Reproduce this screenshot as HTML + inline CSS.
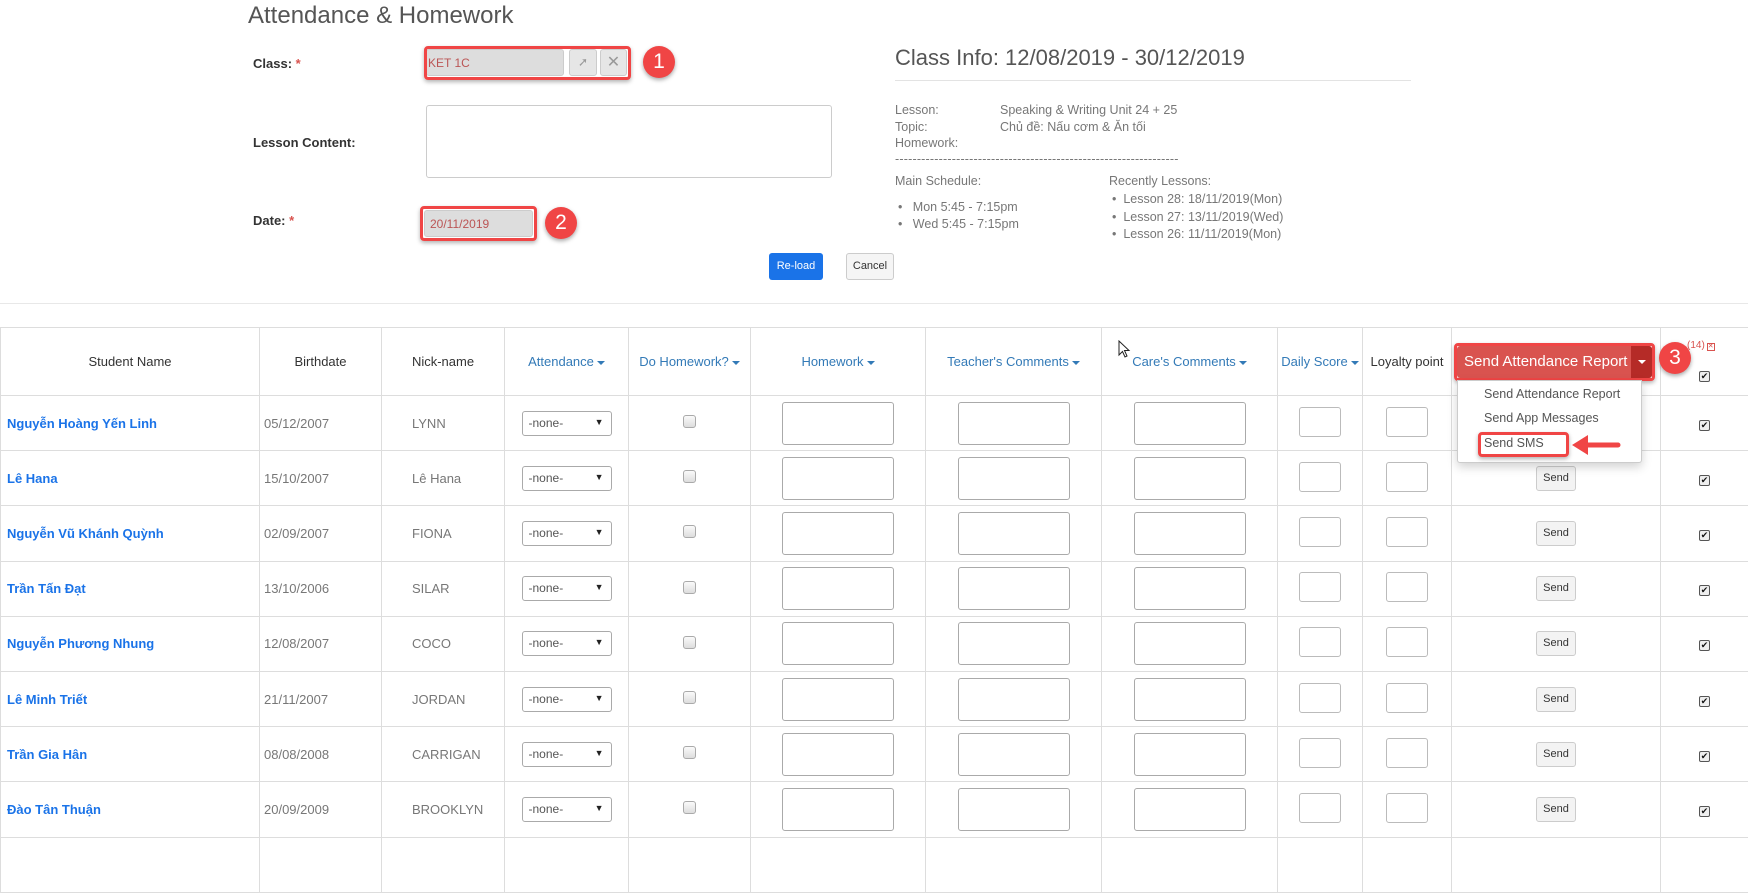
<!DOCTYPE html>
<html><head><meta charset="utf-8">
<style>
*{box-sizing:border-box;margin:0;padding:0}
body{width:1748px;height:829px;overflow:hidden;background:#fff;font-family:"Liberation Sans","Noto Sans CJK SC",sans-serif;color:#333;position:relative;font-size:13px}
.a{position:absolute}
.lbl{font-weight:bold;font-size:13px;color:#333}
.req{color:#d9534f}
.badge{position:absolute;width:32px;height:32px;border-radius:50%;background:#f04545;color:#fff;font-size:21px;text-align:center;line-height:32px;box-shadow:0 2px 4px rgba(0,0,0,.35)}
.redbox{position:absolute;border:3px solid #f04545;border-radius:4px;box-shadow:0 2px 4px rgba(0,0,0,.3)}
.info{font-size:12.5px;color:#777}
table{position:absolute;left:0;top:327px;border-collapse:collapse;table-layout:fixed;width:1748px}
td,th{border:1px solid #ddd;height:55.2px;font-weight:normal;font-size:13px;text-align:center;vertical-align:middle;padding:0;white-space:nowrap}
th{height:68px;color:#333}
th.l{color:#337ab7}
.car{display:inline-block;width:0;height:0;border-left:4px solid transparent;border-right:4px solid transparent;border-top:4px solid #337ab7;margin-left:3px;vertical-align:middle}
td.n{text-align:left;padding-left:6px;color:#1a73e8;font-weight:bold}
td.g{text-align:left;padding-left:4px;color:#777}
.sel{display:inline-block;width:90px;height:25px;border:1px solid #aaa;border-radius:3px;text-align:left;padding:4px 6px;font-size:12px;color:#555;position:relative}
.sel:after{content:"▼";position:absolute;right:7px;top:5px;font-size:9px;color:#222}
.cb{display:inline-block;width:13px;height:13px;border:1px solid #aaa;border-radius:3px;background:linear-gradient(#fafafa,#ddd)}
.ta{display:inline-block;width:112px;height:43px;border:1px solid #aaa;border-radius:3px;margin-top:3px}
.sq{display:inline-block;width:42px;height:30px;border:1px solid #bbb;border-radius:3px}
.sb{display:inline-block;width:40px;height:25px;border:1px solid #ccc;border-radius:3px;background:#f3f3f3;font-size:11px;line-height:23px;color:#333}
.ck{display:inline-block;width:11px;height:11px;border:1px solid #555;border-radius:2px;font-size:9px;line-height:9px;color:#111;background:#eee}
</style></head><body>

<div class="a" style="left:248px;top:2px;font-size:24px;color:#555">Attendance &amp; Homework</div>

<div class="a lbl" style="left:253px;top:56px">Class: <span class="req">*</span></div>
<div class="a" style="left:426px;top:49px;width:138px;height:27px;background:#ddd;border:1px solid #ccc;border-radius:3px;color:#b55;font-size:12px;padding:6px 0 0 1px">KET 1C</div>
<div class="a" style="left:569px;top:49px;width:28px;height:27px;background:#e6e6e6;border:1px solid #ccc;border-radius:3px;color:#999;text-align:center;line-height:25px;font-size:12px">➚</div>
<div class="a" style="left:600px;top:49px;width:27px;height:27px;background:#e6e6e6;border:1px solid #ccc;border-radius:3px;color:#999;text-align:center;line-height:25px;font-size:16px">✕</div>
<div class="redbox" style="left:424px;top:46px;width:207px;height:34px"></div>
<div class="badge" style="left:643px;top:46px">1</div>

<div class="a lbl" style="left:253px;top:135px">Lesson Content:</div>
<div class="a" style="left:426px;top:105px;width:406px;height:73px;border:1px solid #ccc;border-radius:3px"></div>

<div class="a lbl" style="left:253px;top:213px">Date: <span class="req">*</span></div>
<div class="a" style="left:424px;top:210px;width:109px;height:27px;background:#ddd;border:1px solid #ccc;border-radius:3px;color:#b55;font-size:12px;padding:6px 0 0 5px">20/11/2019</div>
<div class="redbox" style="left:420px;top:206px;width:117px;height:35px"></div>
<div class="badge" style="left:545px;top:207px">2</div>

<div class="a" style="left:769px;top:253px;width:54px;height:27px;background:#1a73e8;border-radius:3px;color:#fff;font-size:11px;text-align:center;line-height:27px">Re-load</div>
<div class="a" style="left:846px;top:253px;width:48px;height:27px;background:#f5f5f5;border:1px solid #ccc;border-radius:3px;color:#333;font-size:11px;text-align:center;line-height:25px">Cancel</div>

<div class="a" style="left:895px;top:45px;font-size:22px;color:#555">Class Info: 12/08/2019 - 30/12/2019</div>
<div class="a" style="left:895px;top:80px;width:516px;border-top:1px solid #e3e3e3"></div>
<div class="a info" style="left:895px;top:102px;line-height:16.5px">Lesson:<br>Topic:<br>Homework:</div>
<div class="a info" style="left:1000px;top:102px;line-height:16.5px">Speaking &amp; Writing Unit 24 + 25<br>Chủ đề: Nấu cơm &amp; Ăn tối</div>
<div class="a info" style="left:895px;top:152px;letter-spacing:0.2px">-----------------------------------------------------------------</div>
<div class="a info" style="left:895px;top:174px">Main Schedule:</div>
<div class="a info" style="left:898px;top:199px;line-height:17px">•&nbsp;&nbsp; Mon 5:45 - 7:15pm<br>•&nbsp;&nbsp; Wed 5:45 - 7:15pm</div>
<div class="a info" style="left:1109px;top:174px">Recently Lessons:</div>
<div class="a info" style="left:1112px;top:191px;line-height:17.5px">•&nbsp; Lesson 28: 18/11/2019(Mon)<br>•&nbsp; Lesson 27: 13/11/2019(Wed)<br>•&nbsp; Lesson 26: 11/11/2019(Mon)</div>

<div class="a" style="left:0;top:303px;width:1748px;border-top:1px solid #e8e8e8"></div>

<table>
<colgroup><col style="width:259px"><col style="width:122px"><col style="width:123px"><col style="width:124px"><col style="width:122px"><col style="width:175px"><col style="width:176px"><col style="width:176px"><col style="width:85px"><col style="width:89px"><col style="width:209px"><col style="width:88px"></colgroup>
<tr><th>Student Name</th><th>Birthdate</th><th>Nick-name</th><th class="l">Attendance<span class="car"></span></th><th class="l">Do Homework?<span class="car"></span></th><th class="l">Homework<span class="car"></span></th><th class="l">Teacher's Comments<span class="car"></span></th><th class="l">Care's Comments<span class="car"></span></th><th class="l">Daily Score<span class="car"></span></th><th>Loyalty point</th><th></th><th><span class="ck" style="margin-top:30px">✔</span></th></tr>
<tr><td class="n">Nguyễn Hoàng Yến Linh</td><td class="g">05/12/2007</td><td class="g" style="padding-left:30px">LYNN</td><td><span class="sel">-none-</span></td><td><span class="cb"></span></td><td><span class="ta"></span></td><td><span class="ta"></span></td><td><span class="ta"></span></td><td><span class="sq"></span></td><td><span class="sq"></span></td><td></td><td><span class="ck">✔</span></td></tr>
<tr><td class="n">Lê Hana</td><td class="g">15/10/2007</td><td class="g" style="padding-left:30px">Lê Hana</td><td><span class="sel">-none-</span></td><td><span class="cb"></span></td><td><span class="ta"></span></td><td><span class="ta"></span></td><td><span class="ta"></span></td><td><span class="sq"></span></td><td><span class="sq"></span></td><td><span class="sb">Send</span></td><td><span class="ck">✔</span></td></tr>
<tr><td class="n">Nguyễn Vũ Khánh Quỳnh</td><td class="g">02/09/2007</td><td class="g" style="padding-left:30px">FIONA</td><td><span class="sel">-none-</span></td><td><span class="cb"></span></td><td><span class="ta"></span></td><td><span class="ta"></span></td><td><span class="ta"></span></td><td><span class="sq"></span></td><td><span class="sq"></span></td><td><span class="sb">Send</span></td><td><span class="ck">✔</span></td></tr>
<tr><td class="n">Trần Tấn Đạt</td><td class="g">13/10/2006</td><td class="g" style="padding-left:30px">SILAR</td><td><span class="sel">-none-</span></td><td><span class="cb"></span></td><td><span class="ta"></span></td><td><span class="ta"></span></td><td><span class="ta"></span></td><td><span class="sq"></span></td><td><span class="sq"></span></td><td><span class="sb">Send</span></td><td><span class="ck">✔</span></td></tr>
<tr><td class="n">Nguyễn Phương Nhung</td><td class="g">12/08/2007</td><td class="g" style="padding-left:30px">COCO</td><td><span class="sel">-none-</span></td><td><span class="cb"></span></td><td><span class="ta"></span></td><td><span class="ta"></span></td><td><span class="ta"></span></td><td><span class="sq"></span></td><td><span class="sq"></span></td><td><span class="sb">Send</span></td><td><span class="ck">✔</span></td></tr>
<tr><td class="n">Lê Minh Triết</td><td class="g">21/11/2007</td><td class="g" style="padding-left:30px">JORDAN</td><td><span class="sel">-none-</span></td><td><span class="cb"></span></td><td><span class="ta"></span></td><td><span class="ta"></span></td><td><span class="ta"></span></td><td><span class="sq"></span></td><td><span class="sq"></span></td><td><span class="sb">Send</span></td><td><span class="ck">✔</span></td></tr>
<tr><td class="n">Trần Gia Hân</td><td class="g">08/08/2008</td><td class="g" style="padding-left:30px">CARRIGAN</td><td><span class="sel">-none-</span></td><td><span class="cb"></span></td><td><span class="ta"></span></td><td><span class="ta"></span></td><td><span class="ta"></span></td><td><span class="sq"></span></td><td><span class="sq"></span></td><td><span class="sb">Send</span></td><td><span class="ck">✔</span></td></tr>
<tr><td class="n">Đào Tân Thuận</td><td class="g">20/09/2009</td><td class="g" style="padding-left:30px">BROOKLYN</td><td><span class="sel">-none-</span></td><td><span class="cb"></span></td><td><span class="ta"></span></td><td><span class="ta"></span></td><td><span class="ta"></span></td><td><span class="sq"></span></td><td><span class="sq"></span></td><td><span class="sb">Send</span></td><td><span class="ck">✔</span></td></tr>
<tr><td class="n"></td><td></td><td></td><td></td><td></td><td></td><td></td><td></td><td></td><td></td><td></td><td></td></tr>
</table>

<svg class="a" style="left:1118px;top:340px" width="14" height="20" viewBox="0 0 14 20"><path d="M1 1 L1 15 L4.5 11.5 L7 17 L9 16 L6.5 10.5 L11 10.5 Z" fill="#fff" stroke="#222" stroke-width="1"/></svg>

<div class="a" style="left:1457px;top:346px;width:195px;height:32px;background:#d9534f;border-radius:3px;color:#fff;font-size:15px;line-height:32px;padding-left:7px;white-space:nowrap;overflow:hidden">Send Attendance Report</div>
<div class="a" style="left:1631px;top:346px;width:21px;height:32px;background:#b52b27;border-radius:0 3px 3px 0"><span style="position:absolute;left:7px;top:14px;border-left:4px solid transparent;border-right:4px solid transparent;border-top:4px solid #fff"></span></div>
<div class="redbox" style="left:1454px;top:343px;width:201px;height:38px"></div>
<div class="badge" style="left:1659px;top:342px">3</div>
<div class="a" style="left:1687px;top:340px;font-size:10px;color:#d9534f">(14)<span style="display:inline-block;width:8px;height:8px;border:1px solid #d9534f;margin-left:2px;font-size:7px;line-height:6px">✕</span></div>

<div class="a" style="left:1457px;top:380px;width:185px;height:83px;background:#fff;border:1px solid #ccc;border-radius:0 0 3px 3px;box-shadow:0 4px 10px rgba(0,0,0,.18)"></div>
<div class="a" style="left:1484px;top:387px;font-size:12.5px;color:#555">Send Attendance Report</div>
<div class="a" style="left:1484px;top:411px;font-size:12.5px;color:#555">Send App Messages</div>
<div class="a" style="left:1484px;top:436px;font-size:12.5px;color:#555">Send SMS</div>
<div class="redbox" style="left:1478px;top:432px;width:91px;height:25px"></div>
<svg class="a" style="left:1568px;top:432px" width="54" height="26" viewBox="0 0 54 26"><path d="M50 13 L18 13" stroke="#f04545" stroke-width="5" stroke-linecap="round"/><path d="M4 13 L20 3 L20 23 Z" fill="#f04545"/></svg>
</body></html>
